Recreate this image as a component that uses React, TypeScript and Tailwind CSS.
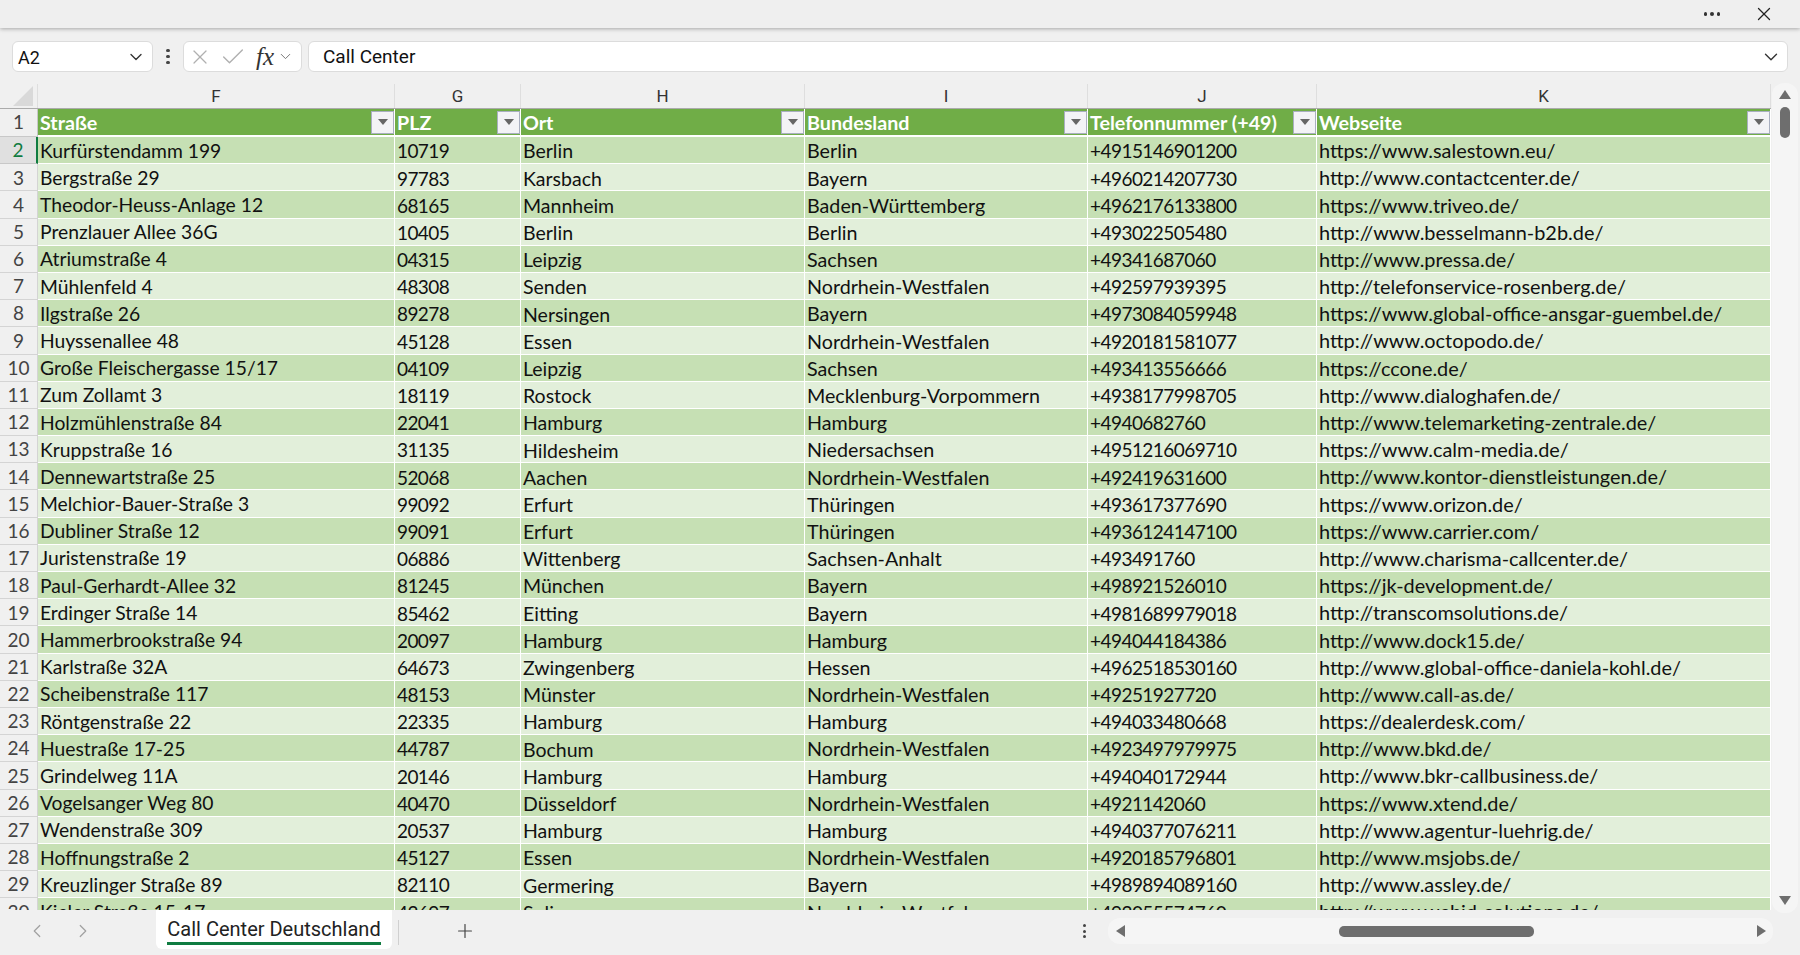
import React from "react";
import { Check, ChevronDown, ChevronLeft, ChevronRight, Plus, X } from "lucide-react";

const columns = [
  { letter: "F", title: "Straße", width: "w-[357px]", cell: "pt-[2px] text-[19.3px]" },
  { letter: "G", title: "PLZ", width: "w-[126px]", cell: "pt-[3px] text-[19px] tracking-[-0.6px]" },
  { letter: "H", title: "Ort", width: "w-[284px]", cell: "pt-[2px] text-[19.5px]" },
  { letter: "I", title: "Bundesland", width: "w-[283px]", cell: "pt-[2px] text-[19.7px]" },
  { letter: "J", title: "Telefonnummer (+49)", width: "w-[229px]", cell: "pt-[3px] text-[19px] tracking-[-0.55px]" },
  { letter: "K", title: "Webseite", width: "w-[454px]", cell: "pt-[2px] text-[19.9px]" },
];

const rows = [
  ["Kurfürstendamm 199", "10719", "Berlin", "Berlin", "+4915146901200", "https://www.salestown.eu/"],
  ["Bergstraße 29", "97783", "Karsbach", "Bayern", "+4960214207730", "http://www.contactcenter.de/"],
  ["Theodor-Heuss-Anlage 12", "68165", "Mannheim", "Baden-Württemberg", "+4962176133800", "https://www.triveo.de/"],
  ["Prenzlauer Allee 36G", "10405", "Berlin", "Berlin", "+493022505480", "http://www.besselmann-b2b.de/"],
  ["Atriumstraße 4", "04315", "Leipzig", "Sachsen", "+49341687060", "http://www.pressa.de/"],
  ["Mühlenfeld 4", "48308", "Senden", "Nordrhein-Westfalen", "+492597939395", "http://telefonservice-rosenberg.de/"],
  ["Ilgstraße 26", "89278", "Nersingen", "Bayern", "+4973084059948", "https://www.global-office-ansgar-guembel.de/"],
  ["Huyssenallee 48", "45128", "Essen", "Nordrhein-Westfalen", "+4920181581077", "http://www.octopodo.de/"],
  ["Große Fleischergasse 15/17", "04109", "Leipzig", "Sachsen", "+493413556666", "https://ccone.de/"],
  ["Zum Zollamt 3", "18119", "Rostock", "Mecklenburg-Vorpommern", "+4938177998705", "http://www.dialoghafen.de/"],
  ["Holzmühlenstraße 84", "22041", "Hamburg", "Hamburg", "+4940682760", "http://www.telemarketing-zentrale.de/"],
  ["Kruppstraße 16", "31135", "Hildesheim", "Niedersachsen", "+4951216069710", "https://www.calm-media.de/"],
  ["Dennewartstraße 25", "52068", "Aachen", "Nordrhein-Westfalen", "+492419631600", "http://www.kontor-dienstleistungen.de/"],
  ["Melchior-Bauer-Straße 3", "99092", "Erfurt", "Thüringen", "+493617377690", "https://www.orizon.de/"],
  ["Dubliner Straße 12", "99091", "Erfurt", "Thüringen", "+4936124147100", "https://www.carrier.com/"],
  ["Juristenstraße 19", "06886", "Wittenberg", "Sachsen-Anhalt", "+493491760", "http://www.charisma-callcenter.de/"],
  ["Paul-Gerhardt-Allee 32", "81245", "München", "Bayern", "+498921526010", "https://jk-development.de/"],
  ["Erdinger Straße 14", "85462", "Eitting", "Bayern", "+4981689979018", "http://transcomsolutions.de/"],
  ["Hammerbrookstraße 94", "20097", "Hamburg", "Hamburg", "+494044184386", "http://www.dock15.de/"],
  ["Karlstraße 32A", "64673", "Zwingenberg", "Hessen", "+4962518530160", "http://www.global-office-daniela-kohl.de/"],
  ["Scheibenstraße 117", "48153", "Münster", "Nordrhein-Westfalen", "+49251927720", "http://www.call-as.de/"],
  ["Röntgenstraße 22", "22335", "Hamburg", "Hamburg", "+494033480668", "https://dealerdesk.com/"],
  ["Huestraße 17-25", "44787", "Bochum", "Nordrhein-Westfalen", "+4923497979975", "http://www.bkd.de/"],
  ["Grindelweg 11A", "20146", "Hamburg", "Hamburg", "+494040172944", "http://www.bkr-callbusiness.de/"],
  ["Vogelsanger Weg 80", "40470", "Düsseldorf", "Nordrhein-Westfalen", "+4921142060", "https://www.xtend.de/"],
  ["Wendenstraße 309", "20537", "Hamburg", "Hamburg", "+4940377076211", "http://www.agentur-luehrig.de/"],
  ["Hoffnungstraße 2", "45127", "Essen", "Nordrhein-Westfalen", "+4920185796801", "http://www.msjobs.de/"],
  ["Kreuzlinger Straße 89", "82110", "Germering", "Bayern", "+4989894089160", "http://www.assley.de/"],
  ["Kieler Straße 15-17", "42697", "Solingen", "Nordrhein-Westfalen", "+492055574760", "http://www.webid-solutions.de/"],
];

const FilterButton = () => (
  <div className="flex h-[23px] w-[23px] shrink-0 items-center justify-center border border-[#a9afc0] bg-[#f3f3f6]">
    <svg width="10" height="6" viewBox="0 0 10 6">
      <path d="M0 0h10L5 6z" fill="#666666" />
    </svg>
  </div>
);

export default function App() {
  return (
    <div className="flex h-[955px] w-[1800px] flex-col overflow-hidden bg-[#f0f0f0] font-['Lato',sans-serif] text-[#111111]">
      {/* window title strip */}
      <div className="relative z-10 flex h-[28px] shrink-0 items-center justify-end bg-[#efefef] pr-[25px] shadow-[0_1px_4px_rgba(0,0,0,0.3)]">
        <div className="mr-[33px] flex gap-[3px]">
          <span className="h-[3.5px] w-[3.5px] rounded-full bg-[#333333]" />
          <span className="h-[3.5px] w-[3.5px] rounded-full bg-[#333333]" />
          <span className="h-[3.5px] w-[3.5px] rounded-full bg-[#333333]" />
        </div>
        <X size={22} strokeWidth={1.4} className="text-[#222222]" />
      </div>

      {/* formula bar */}
      <div className="mt-[13px] flex h-[31px] shrink-0 items-stretch pl-[12px] pr-[12px] font-['Roboto',sans-serif]">
        <div className="flex w-[141px] items-center justify-between rounded-[6px] border border-[#dcdcdc] bg-white pl-[5px] pr-[6px] pt-[1px] text-[18px]">
          <span>A2</span>
          <ChevronDown size={20} strokeWidth={1.6} className="text-[#333333]" />
        </div>
        <div className="flex w-[30px] flex-col items-center justify-center gap-[2.5px]">
          <span className="h-[3.5px] w-[3.5px] rounded-full bg-[#444444]" />
          <span className="h-[3.5px] w-[3.5px] rounded-full bg-[#444444]" />
          <span className="h-[3.5px] w-[3.5px] rounded-full bg-[#444444]" />
        </div>
        <div className="flex w-[119px] items-center rounded-[6px] border border-[#dcdcdc] bg-white pl-[4px]">
          <X size={24} strokeWidth={1.2} className="text-[#b0b0b0]" />
          <Check size={28} strokeWidth={1.2} className="ml-[7px] text-[#b0b0b0]" />
          <span className="ml-[9px] font-['Liberation_Serif',serif] text-[25px] italic leading-none text-[#333333]">
            fx
          </span>
          <ChevronDown size={17} strokeWidth={1.4} className="ml-[3px] text-[#777777]" />
        </div>
        <div className="ml-[6px] flex flex-1 items-center justify-between rounded-[6px] border border-[#dcdcdc] bg-white pl-[14px] pr-[5px] pt-[1px] text-[19px]">
          <span>Call Center</span>
          <ChevronDown size={22} strokeWidth={1.5} className="text-[#333333]" />
        </div>
      </div>

      <div className="mt-[12px] flex min-h-0 flex-1">
        {/* sheet */}
        <div className="flex w-[1771px] shrink-0 flex-col overflow-hidden">
          <div className="flex h-[25px] shrink-0 border-b border-[#ababab]">
            <div className="flex w-[38px] shrink-0 items-end justify-end border-r border-[#dedede] pb-[2px] pr-[4px]">
              <svg width="20" height="20" viewBox="0 0 20 20">
                <path d="M20 0v20H0z" fill="#d9d9d9" />
              </svg>
            </div>
            {columns.map((col) => (
              <div
                key={col.letter}
                className={`${col.width} flex shrink-0 items-center justify-center border-r border-[#dedede] pt-[2px] font-['Roboto',sans-serif] text-[17px] text-[#333333]`}
              >
                {col.letter}
              </div>
            ))}
          </div>

          <div className="flex h-[28px] shrink-0">
            <div className="flex w-[38px] shrink-0 items-center justify-center border-b border-r border-[#c8c8c8] text-[19px] text-[#444444]">
              1
            </div>
            {columns.map((col) => (
              <div
                key={col.letter}
                className={`${col.width} flex shrink-0 items-start border-b-2 border-r border-white`}
              >
                <div className="flex h-full w-full items-center justify-between overflow-hidden bg-[#70ad47] pl-[2px] text-[19.7px] font-bold text-white">
                  <span className="whitespace-nowrap pt-[2px]">{col.title}</span>
                  <FilterButton />
                </div>
              </div>
            ))}
          </div>

          {rows.map((row, i) => {
            const even = i % 2 === 0;
            return (
              <div key={i} className="flex h-[27.2px] shrink-0">
                <div
                  className={
                    i === 0
                      ? "flex w-[38px] shrink-0 items-center justify-center border-b border-r-2 border-b-[#c8c8c8] border-r-[#107c41] bg-[#e0e0e0] pt-[1px] text-[19px] text-[#107c41]"
                      : "flex w-[38px] shrink-0 items-center justify-center border-b border-r border-[#d4d4d4] pt-[1px] text-[19px] text-[#444444]"
                  }
                >
                  {i + 2}
                </div>
                {row.map((cell, j) => (
                  <div
                    key={j}
                    className={`${columns[j].width} ${columns[j].cell} ${even ? "bg-[#c6e0b4]" : "bg-[#e2efda]"} flex shrink-0 items-center overflow-hidden whitespace-nowrap border-b border-r border-white pl-[2px]`}
                  >
                    {cell}
                  </div>
                ))}
              </div>
            );
          })}
        </div>

        {/* vertical scrollbar */}
        <div className="relative z-10 mb-[-3px] ml-[1px] mt-[-1px] flex w-[26px] flex-col items-center rounded-[12px] bg-[#f5f5f5] pb-[8px] pt-[7px]">
          <svg width="12" height="9" viewBox="0 0 12 9">
            <path d="M6 0l6 9H0z" fill="#6e6e6e" />
          </svg>
          <div className="mt-[8px] h-[31px] w-[10px] rounded-[5px] bg-[#6e6e6e]" />
          <svg width="12" height="9" viewBox="0 0 12 9" className="mt-auto">
            <path d="M0 0h12L6 9z" fill="#6e6e6e" />
          </svg>
        </div>
      </div>

      {/* sheet tabs */}
      <div className="flex h-[45px] shrink-0 items-start">
        <div className="flex h-[42px] w-[156px] shrink-0 items-center gap-[24px] pl-[26px]">
          <ChevronLeft size={22} strokeWidth={1.3} className="text-[#a0a0a0]" />
          <ChevronRight size={22} strokeWidth={1.3} className="text-[#a0a0a0]" />
        </div>
        <div className="flex h-[39px] w-[236px] shrink-0 flex-col items-center rounded-b-[6px] bg-white pt-[6px] font-['Roboto',sans-serif]">
          <span className="border-b-[3px] border-[#107c41] text-[20px] leading-[26px] text-[#222222]">
            Call Center Deutschland
          </span>
        </div>
        <div className="ml-[6px] mt-[10px] h-[25px] w-[1px] shrink-0 bg-[#d0d0d0]" />
        <Plus size={22} strokeWidth={1.3} className="ml-[55px] mt-[10px] shrink-0 text-[#444444]" />
        <div className="ml-[607px] mt-[14px] flex shrink-0 flex-col gap-[2.5px]">
          <span className="h-[3px] w-[3px] rounded-full bg-[#444444]" />
          <span className="h-[3px] w-[3px] rounded-full bg-[#444444]" />
          <span className="h-[3px] w-[3px] rounded-full bg-[#444444]" />
        </div>
        <div className="ml-[22px] mr-[27px] mt-[8px] flex h-[26px] flex-1 items-center rounded-[12px] bg-[#f5f5f5] pl-[8px] pr-[7px]">
          <svg width="9" height="12" viewBox="0 0 9 12">
            <path d="M9 0v12L0 6z" fill="#6e6e6e" />
          </svg>
          <div className="ml-[214px] h-[11px] w-[195px] rounded-[5px] bg-[#6e6e6e]" />
          <svg width="9" height="12" viewBox="0 0 9 12" className="ml-auto">
            <path d="M0 0v12l9-6z" fill="#6e6e6e" />
          </svg>
        </div>
      </div>
    </div>
  );
}
